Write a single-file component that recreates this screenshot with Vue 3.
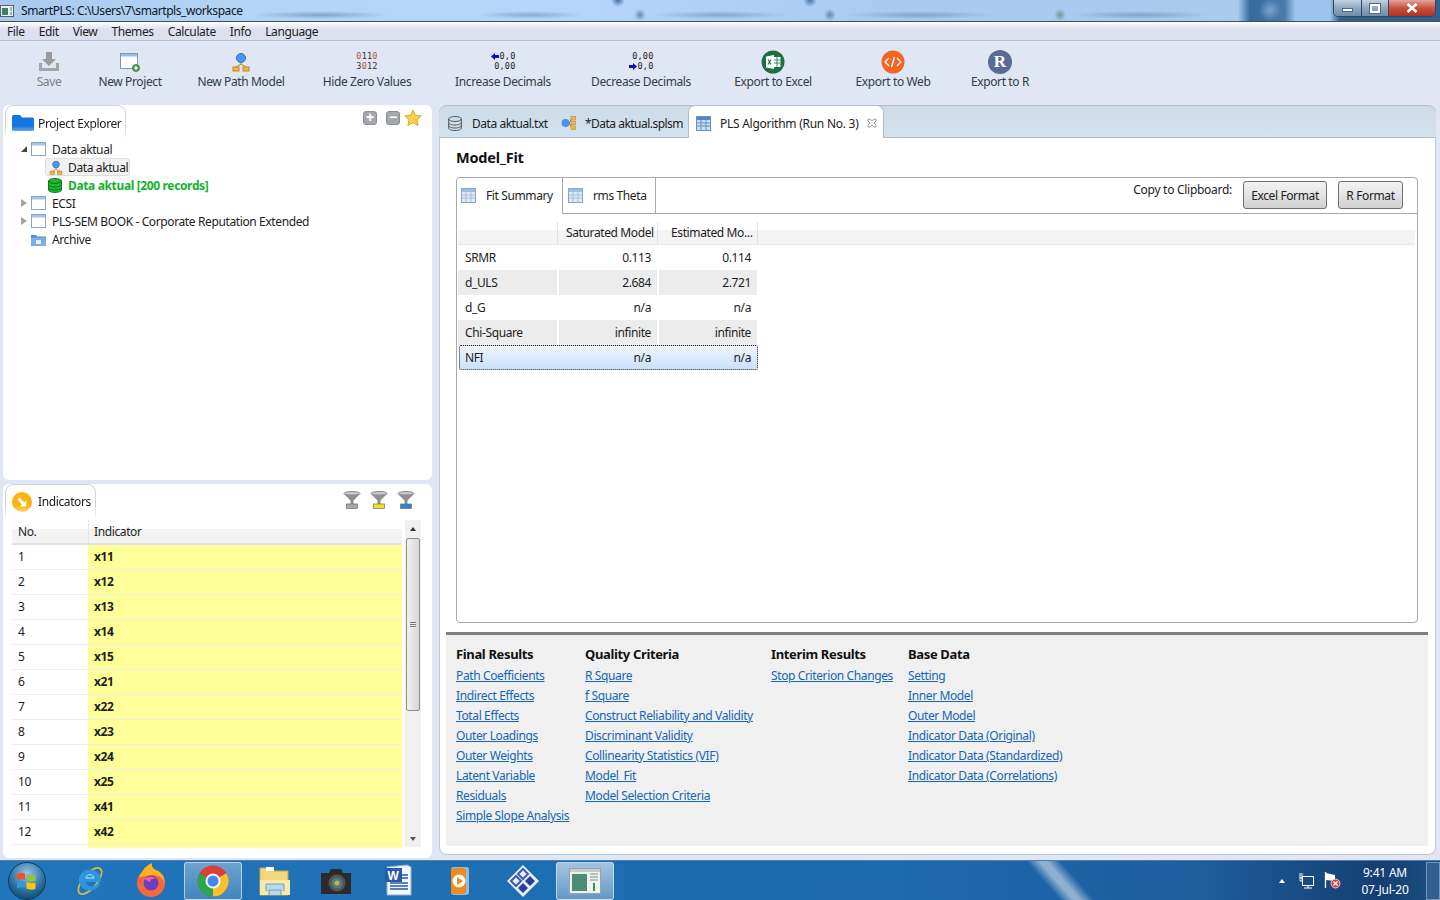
<script setup>
const fitRows = [
  { name: 'SRMR', a: '0.113', b: '0.114' },
  { name: 'd_ULS', a: '2.684', b: '2.721' },
  { name: 'd_G', a: 'n/a', b: 'n/a' },
  { name: 'Chi-Square', a: 'infinite', b: 'infinite' },
  { name: 'NFI', a: 'n/a', b: 'n/a' }
]

const indicators = ['x11', 'x12', 'x13', 'x14', 'x15', 'x21', 'x22', 'x23', 'x24', 'x25', 'x41', 'x42']

const resultGroups = [
  { title: 'Final Results', links: ['Path Coefficients', 'Indirect Effects', 'Total Effects', 'Outer Loadings', 'Outer Weights', 'Latent Variable', 'Residuals', 'Simple Slope Analysis'] },
  { title: 'Quality Criteria', links: ['R Square', 'f Square', 'Construct Reliability and Validity', 'Discriminant Validity', 'Collinearity Statistics (VIF)', 'Model_Fit', 'Model Selection Criteria'] },
  { title: 'Interim Results', links: ['Stop Criterion Changes'] },
  { title: 'Base Data', links: ['Setting', 'Inner Model', 'Outer Model', 'Indicator Data (Original)', 'Indicator Data (Standardized)', 'Indicator Data (Correlations)'] }
]
</script>

<template>
  <div class="desktop">
    <svg class="defs" width="0" height="0">
      <defs>
        <symbol id="project" viewBox="0 0 15 14">
          <rect x="0.5" y="0.5" width="14" height="13" fill="#fff" stroke="#8ba3c4" />
          <rect x="1" y="1" width="13" height="2.5" fill="#a9c4e6" />
        </symbol>
        <symbol id="grid" viewBox="0 0 15 15">
          <rect x="0.5" y="0.5" width="14" height="14" fill="#dfeaf6" stroke="#8aa6c8" />
          <rect x="1" y="1" width="13" height="3" fill="#9dbfe4" />
          <path d="M1 7h13M1 10h13M5 4v10M10 4v10" stroke="#a8bfd8" fill="none" />
        </symbol>
        <symbol id="model" viewBox="0 0 18 20">
          <circle cx="9" cy="6" r="4.5" fill="#4d94f5" stroke="#2d6dc4" />
          <path d="M9 10v3M4 15l5-3 5 3" stroke="#b98a2a" fill="none" />
          <rect x="1" y="15" width="6" height="4" fill="#f7b733" stroke="#b98a2a" />
          <rect x="11" y="15" width="6" height="4" fill="#f7b733" stroke="#b98a2a" />
        </symbol>
      </defs>
    </svg>

    <header class="titlebar">
      <svg class="app-icon" width="14" height="14" viewBox="0 0 14 14">
        <rect x="0.5" y="1.5" width="13" height="11" fill="#eef2f6" stroke="#56606c" />
        <rect x="2" y="4" width="6" height="7" fill="#3e7f6c" />
        <path d="M10 4h2M10 6h2M11 8v3" stroke="#2d8a4b" />
      </svg>
      <span class="title-text">SmartPLS: C:\Users\7\smartpls_workspace</span>
      <div class="window-btns">
        <span class="win-btn win-min"><i></i></span>
        <span class="win-btn win-max"><i></i></span>
        <span class="win-btn win-close">
          <svg width="14" height="10" viewBox="0 0 14 10">
            <path d="M2.5 1l9 8M11.5 1l-9 8" stroke="#fff" stroke-width="2.6" />
          </svg>
        </span>
      </div>
    </header>

    <nav class="menubar">
      <span>File</span><span>Edit</span><span>View</span><span>Themes</span><span>Calculate</span><span>Info</span><span>Language</span>
    </nav>

    <div class="toolbar">
      <div class="tool disabled">
        <svg width="22" height="20" viewBox="0 0 22 20">
          <path d="M8 0h6v7h4l-7 7-7-7h4z" fill="#9b9b9b" />
          <path d="M1 11h3v5h14v-5h3v8H1z" fill="#a5a5a5" />
        </svg>
        <span>Save</span>
      </div>
      <div class="tool">
        <svg width="20" height="20" viewBox="0 0 20 20">
          <rect x="0.5" y="1.5" width="17" height="15" fill="#fff" stroke="#7d96b8" />
          <rect x="1" y="2" width="16" height="2.5" fill="#9cbde4" />
          <circle cx="16" cy="16" r="3.6" fill="#4f9a45" stroke="#2e6f2a" stroke-width="0.6" />
          <path d="M16 14v4M14 16h4" stroke="#fff" stroke-width="1.2" />
        </svg>
        <span>New Project</span>
      </div>
      <div class="tool">
        <svg width="18" height="20"><use href="#model" /></svg>
        <span>New Path Model</span>
      </div>
      <div class="tool">
        <div class="digits">
          <div><b>0</b>11<b>0</b></div>
          <div>3<b>0</b>12</div>
        </div>
        <span>Hide Zero Values</span>
      </div>
      <div class="tool">
        <div class="digits decimals">
          <div><svg class="dec-arrow" width="8" height="7" viewBox="0 0 8 7"><path d="M0 3.500L4 0v2h4v3H4v2z" fill="#0d0dc4" /></svg>0,0</div>
          <div>0,00</div>
        </div>
        <span>Increase Decimals</span>
      </div>
      <div class="tool">
        <div class="digits decimals">
          <div>0,00</div>
          <div><svg class="dec-arrow" width="8" height="7" viewBox="0 0 8 7"><path d="M8 3.500L4 0v2H0v3h4v2z" fill="#0d0dc4" /></svg>0,0</div>
        </div>
        <span>Decrease Decimals</span>
      </div>
      <div class="tool">
        <svg width="24" height="24" viewBox="0 0 24 24">
          <circle cx="12" cy="12" r="11.5" fill="#1d6f42" />
          <path d="M5 6.5l8-1.5v14l-8-1.5z" fill="#fff" />
          <rect x="13" y="7" width="6.5" height="10" fill="#fff" />
          <path d="M13 10h6.5M13 13h6.5M16 7v10" stroke="#1d6f42" stroke-width="0.8" />
          <path d="M7 9.5l3 5M10 9.5l-3 5" stroke="#1d6f42" stroke-width="1.1" />
        </svg>
        <span>Export to Excel</span>
      </div>
      <div class="tool">
        <svg width="24" height="24" viewBox="0 0 24 24">
          <circle cx="12" cy="12" r="11.5" fill="#f26522" />
          <path d="M8 8l-4 4 4 4M16 8l4 4-4 4M13.5 7l-3 10" stroke="#fff" stroke-width="1.3" fill="none" />
        </svg>
        <span>Export to Web</span>
      </div>
      <div class="tool">
        <div class="r-badge">R</div>
        <span>Export to R</span>
      </div>
    </div>

    <main class="workspace">
      <div class="left-col">
        <section class="panel explorer">
          <div class="panel-head">
            <div class="view-tab">
              <svg width="22" height="16" viewBox="0 0 22 16">
                <path d="M0 1.5Q0 0 1.5 0H8l2 2.500h10.500Q22 2.500 22 4v10.500Q22 16 20.500 16h-19Q0 16 0 14.500z" fill="#1476e0" />
              </svg>
              <span>Project Explorer</span>
            </div>
            <div class="head-icons">
              <span class="square-btn">+</span>
              <span class="square-btn">−</span>
              <svg width="18" height="18" viewBox="0 0 18 18">
                <path d="M9 1l2.400 5.300 5.800.6-4.300 3.900 1.200 5.700L9 13.600l-5.100 2.900 1.200-5.700L.8 6.900l5.800-.6z" fill="#fbd24e" stroke="#e0a526" />
              </svg>
            </div>
          </div>
          <ul class="tree">
            <li>
              <i class="tw open"></i>
              <svg class="node" width="15" height="14"><use href="#project" /></svg>
              <span>Data aktual</span>
            </li>
            <li class="child">
              <div class="selected-node">
                <svg width="14" height="15" viewBox="0 0 18 20"><use href="#model" /></svg>
                <span>Data aktual</span>
              </div>
            </li>
            <li class="child">
              <svg class="data-green" width="14" height="15" viewBox="0 0 14 15">
                <ellipse cx="7" cy="3" rx="6.500" ry="2.500" fill="#13c02a" stroke="#0a5c14" stroke-width="0.8" />
                <path d="M.5 3v9c0 1.500 3 2.500 6.500 2.500s6.500-1 6.500-2.500V3c0 1.500-3 2.500-6.500 2.500S.5 4.500.5 3z" fill="#13c02a" stroke="#0a5c14" stroke-width="0.8" />
                <path d="M.5 6.500c0 1.500 3 2.500 6.500 2.500s6.500-1 6.500-2.500M.5 9.500c0 1.500 3 2.500 6.500 2.500s6.500-1 6.500-2.500" fill="none" stroke="#0a5c14" stroke-width="0.8" />
              </svg>
              <span class="green-label">Data aktual [200 records]</span>
            </li>
            <li>
              <i class="tw"></i>
              <svg class="node" width="15" height="14"><use href="#project" /></svg>
              <span>ECSI</span>
            </li>
            <li>
              <i class="tw"></i>
              <svg class="node" width="15" height="14"><use href="#project" /></svg>
              <span>PLS-SEM BOOK - Corporate Reputation Extended</span>
            </li>
            <li>
              <i class="tw blank"></i>
              <svg class="node" width="15" height="13" viewBox="0 0 15 13">
                <path d="M0 2h5l1 1.500h9V13H0z" fill="#4d8fd6" />
                <rect x="0" y="4.500" width="15" height="8.500" fill="#79aee6" />
                <rect x="5" y="7" width="5" height="4" fill="#e6f0fb" />
              </svg>
              <span>Archive</span>
            </li>
          </ul>
        </section>

        <section class="panel indicators">
          <div class="panel-head">
            <div class="view-tab">
              <svg width="20" height="20" viewBox="0 0 20 20">
                <circle cx="10" cy="10" r="10" fill="#fbb40f" />
                <path d="M5.500 7.500l2-2 4.700 4.700 2-2v6.300H7.900l2-2z" fill="#fff" />
              </svg>
              <span>Indicators</span>
            </div>
            <div class="filter-icons">
              <svg v-for="c in ['#a9a9a9', '#f4e521', '#2b86d8']" :key="c" width="18" height="18" viewBox="0 0 18 18">
                <ellipse cx="9" cy="2.500" rx="8" ry="2" fill="#c9c9c9" stroke="#8a8a8a" />
                <path d="M1.500 3.500l6 6h3l6-6z" fill="#8f8f8f" />
                <rect x="7.500" y="9" width="3" height="4" fill="#8f8f8f" />
                <rect x="3.500" y="13" width="11" height="4.500" :fill="c" stroke="#6f6f6f" stroke-width="0.7" />
              </svg>
            </div>
          </div>
          <div class="ind-body">
            <div class="ind-table">
              <div class="ind-head">
                <div class="ind-no">No.</div>
                <div class="ind-name">Indicator</div>
              </div>
              <div v-for="(item, i) in indicators" :key="item" class="ind-row">
                <div class="ind-no">{{ i + 1 }}</div>
                <div class="ind-name">{{ item }}</div>
              </div>
              <div class="ind-tail"></div>
            </div>
            <div class="scrollbar">
              <i class="scroll-up"></i>
              <div class="scroll-thumb"><b></b></div>
              <i class="scroll-down"></i>
            </div>
          </div>
        </section>
      </div>

      <section class="panel editor">
        <div class="editor-tabs">
          <div class="etab first">
            <svg width="14" height="15" viewBox="0 0 14 15">
              <ellipse cx="7" cy="3" rx="6.300" ry="2.500" fill="none" stroke="#555" />
              <path d="M.7 3v9c0 1.500 2.800 2.500 6.300 2.500s6.300-1 6.300-2.500V3M.7 6.500c0 1.500 2.800 2.500 6.300 2.500s6.300-1 6.300-2.500M.7 9.500c0 1.500 2.800 2.500 6.300 2.500s6.300-1 6.300-2.500" fill="none" stroke="#555" />
            </svg>
            <span>Data aktual.txt</span>
          </div>
          <div class="etab second">
            <svg width="15" height="14" viewBox="0 0 15 14">
              <circle cx="4.500" cy="7" r="4" fill="#4c93ef" />
              <path d="M8 7l2.500-4M8 7l2.500 4" stroke="#777" fill="none" />
              <rect x="10" y="0.500" width="4.500" height="3.500" fill="#f6b73c" stroke="#b8862a" stroke-width="0.6" />
              <rect x="10" y="5.200" width="4.500" height="3.500" fill="#f6b73c" stroke="#b8862a" stroke-width="0.6" />
              <rect x="10" y="10" width="4.500" height="3.500" fill="#f6b73c" stroke="#b8862a" stroke-width="0.6" />
            </svg>
            <span>*Data aktual.splsm</span>
          </div>
          <div class="etab active">
            <svg width="15" height="15" viewBox="0 0 15 15">
              <rect x="0.500" y="0.500" width="14" height="14" fill="#c8def5" stroke="#6c8fb8" />
              <rect x="1" y="1" width="13" height="3" fill="#4c86cc" />
              <path d="M1 7h13M1 10h13M5 4v10M10 4v10" stroke="#5f8fc5" fill="none" />
            </svg>
            <span>PLS Algorithm (Run No. 3)</span>
            <svg class="tab-close" width="10" height="10" viewBox="0 0 10 10">
              <path d="M1 1h2l2 2 2-2h2v2L7 5l2 2v2H7L5 7 3 9H1V7l2-2-2-2z" fill="none" stroke="#8a8a8a" stroke-width="0.8" />
            </svg>
          </div>
        </div>

        <div class="report">
          <h2 class="report-title">Model_Fit</h2>
          <div class="card">
            <div class="card-head">
              <div class="ctab on">
                <svg width="15" height="15"><use href="#grid" /></svg>
                <span>Fit Summary</span>
              </div>
              <div class="ctab">
                <svg width="15" height="15"><use href="#grid" /></svg>
                <span>rms Theta</span>
              </div>
              <div class="clipboard">
                <span>Copy to Clipboard:</span>
                <button class="btn-excel">Excel Format</button>
                <button class="btn-r">R Format</button>
              </div>
            </div>
            <div class="fit-table">
              <div class="fit-head">
                <div class="fit-c0"></div>
                <div class="fit-c1">Saturated Model</div>
                <div class="fit-c2">Estimated Mo...</div>
              </div>
              <div v-for="row in fitRows" :key="row.name" class="fit-row">
                <div class="fit-name">{{ row.name }}</div>
                <div class="fit-val">{{ row.a }}</div>
                <div class="fit-val">{{ row.b }}</div>
              </div>
            </div>
          </div>
        </div>

        <div class="results">
          <div v-for="group in resultGroups" :key="group.title" class="result-col">
            <h3>{{ group.title }}</h3>
            <a v-for="link in group.links" :key="link">{{ link }}</a>
          </div>
        </div>
      </section>
    </main>

    <footer class="taskbar">
      <div class="start-orb">
        <svg width="24" height="24" viewBox="0 0 24 24">
          <path d="M2 5q4-2 8-.5V11q-4-1.500-8 .5z" fill="#e8552d" />
          <path d="M11.500 5q4 2 9 .5V12q-5 1.500-9-.5z" fill="#8cc63f" />
          <path d="M2 13q4-2 8-.5V19q-4-1.500-8 .5z" fill="#2f9ae0" />
          <path d="M11.500 13q4 2 9 .5V20q-5 1.500-9-.5z" fill="#fcc419" />
        </svg>
      </div>
      <div class="task"><svg width="34" height="36" viewBox="0 0 34 36">
        <ellipse cx="17" cy="18" rx="16" ry="7" transform="rotate(-50 17 18)" fill="none" stroke="#d9b64e" stroke-width="1.800" />
        <path d="M6 19a11 11 0 1 1 21.800 0H13c.5 5 8 6 11.500 1.500h3C24 30 8 30 6 19z" fill="#2f96de" />
        <path d="M13 15h8c-.5-4.500-7.500-4.500-8 0z" fill="#2f96de" stroke="#bfe2f8" />
      </svg></div>
      <div class="task"><svg width="32" height="36" viewBox="0 0 32 36">
        <circle cx="16" cy="20" r="14" fill="#f7673b" />
        <path d="M4 14Q10 2 17 0q-1 6 6 8 6 3 7 12-4-9-14-8z" fill="#ffb21f" />
        <circle cx="16" cy="20" r="7.500" fill="#6c3ec4" />
        <path d="M9 16q7-5 12 0-6-1-6 3z" fill="#f25d9c" />
      </svg></div>
      <div class="task active-task"><svg width="34" height="34" viewBox="0 0 34 34">
        <circle cx="17" cy="17" r="15.500" fill="#dc3f34" />
        <path d="M17 17L3.600 9.200A15.500 15.500 0 0 0 17 32.500z" fill="#2ea44f" />
        <path d="M17 17V32.500A15.500 15.500 0 0 0 30.400 9.200z" fill="#fbc02d" />
        <circle cx="17" cy="17" r="7.500" fill="#f2f6fb" />
        <circle cx="17" cy="17" r="5.500" fill="#4285f4" />
      </svg></div>
      <div class="task"><svg width="34" height="32" viewBox="0 0 34 32">
        <path d="M2 3h12l2 3h14v24H2z" fill="#f4d77d" stroke="#caa84c" />
        <path d="M8 2h8v4H8z" fill="#fff" />
        <path d="M2 15h30v15H2z" fill="#fbe9a8" />
        <path d="M8 26v-7h18v7M11 30v-5h12v5" fill="#bcd8ea" stroke="#6f9fc0" />
      </svg></div>
      <div class="task"><svg width="32" height="28" viewBox="0 0 32 28">
        <path d="M1 6h8l2-4h10l2 4h8v21H1z" fill="#2b2b2b" />
        <circle cx="17" cy="16" r="8.500" fill="#555" />
        <circle cx="17" cy="16" r="5.500" fill="#4f7d78" />
        <circle cx="17" cy="16" r="2.500" fill="#c8b04f" />
      </svg></div>
      <div class="task"><svg width="32" height="34" viewBox="0 0 32 34">
        <path d="M5 3l20-2 4 2v28H5z" fill="#f3f6fb" stroke="#9bb0cc" />
        <path d="M15 11h11M15 14h11M8 19h18M8 22h18M8 25h18" stroke="#2a5aa8" stroke-width="1.500" />
        <rect x="3" y="4" width="17" height="14" fill="#2a5aa8" />
        <text x="5.500" y="15.500" class="word-w">W</text>
      </svg></div>
      <div class="task media"><svg width="24" height="30" viewBox="0 0 24 30">
        <rect x="1" y="1" width="18" height="28" rx="3" fill="#8cbde2" />
        <rect x="1" y="2" width="15" height="26" rx="3" fill="#f08a1d" />
        <circle cx="9" cy="15" r="6.500" fill="#fff" />
        <path d="M7 11l6 4-6 4z" fill="#f08a1d" />
      </svg></div>
      <div class="task diamond"><svg width="34" height="34" viewBox="0 0 34 34">
        <path d="M17 1l16 16-16 16L1 17z" fill="#e9f0fb" />
        <path d="M17 5l5 5-5 5-5-5zM10 12l5 5-5 5-5-5z" fill="none" stroke="#3d5bb5" stroke-width="2" />
        <path d="M24 12l5 5-5 5-5-5zM17 19l5 5-5 5-5-5z" fill="#2a3f99" />
      </svg></div>
      <div class="task active-task light"><svg width="32" height="26" viewBox="0 0 32 26">
        <rect x="0.500" y="0.500" width="31" height="25" fill="#eef2ef" stroke="#9aa3a7" />
        <rect x="1" y="1" width="30" height="3" fill="#c4ccd0" />
        <path d="M3 6h15v17H3z" fill="#4e8c74" />
        <path d="M21 6h8M21 9h8M21 12h8" stroke="#7d8d96" />
        <path d="M25 15v8" stroke="#2e9a4e" stroke-width="2" />
      </svg></div>

      <div class="tray">
        <i class="tray-up"></i>
        <svg width="16" height="16" viewBox="0 0 16 16">
          <rect x="3.500" y="3.500" width="11" height="9" fill="none" stroke="#fff" />
          <path d="M1 0v5M3 0v5M1 5h2v3H1zM5 15h8M9 12.500V15" stroke="#fff" />
        </svg>
        <svg width="17" height="17" viewBox="0 0 17 17">
          <path d="M1.500 0v16" stroke="#fff" stroke-width="1.300" />
          <path d="M2 1l9 2v6L2 8z" fill="#fff" />
          <circle cx="11.500" cy="11.500" r="4.500" fill="#e23a3a" stroke="#fff" stroke-width="0.700" />
          <path d="M9.500 9.500l4 4M13.500 9.500l-4 4" stroke="#fff" stroke-width="1.300" />
        </svg>
        <div class="clock">
          <span>9:41 AM</span>
          <span>07-Jul-20</span>
        </div>
        <div class="show-desktop"></div>
      </div>
    </footer>
  </div>
</template>

<style>
html, body { margin: 0; overflow: hidden; }
</style>

<style scoped>
* { box-sizing: border-box; }
.defs { position: absolute; }
.desktop {
  width: 1440px;
  height: 900px;
  display: flex;
  flex-direction: column;
  background: #e1e6f4;
  font-family: "Noto Sans", sans-serif;
  font-size: 12px;
  letter-spacing: -0.38px;
  color: #1d1d1d;
  overflow: hidden;
}

.titlebar {
  height: 22px;
  display: flex;
  align-items: flex-start;
  border-bottom: 1px solid #3c4f63;
  background:
    radial-gradient(circle 11px at 1270px 10px, #7fa3c9, transparent),
    radial-gradient(circle 7px at 618px 0, #3f6fa8, transparent),
    radial-gradient(circle 7px at 810px 0, #3f6fa8, transparent),
    radial-gradient(circle 6px at 640px 15px, rgba(70,85,110,.6), transparent),
    radial-gradient(circle 6px at 830px 15px, rgba(70,85,110,.6), transparent),
    radial-gradient(circle 6px at 1060px 15px, rgba(70,120,90,.6), transparent),
    radial-gradient(ellipse 70px 4px at 320px 15px, rgba(60,90,130,.4), transparent),
    radial-gradient(ellipse 55px 4px at 530px 15px, rgba(60,90,130,.35), transparent),
    radial-gradient(ellipse 70px 4px at 720px 15px, rgba(60,90,130,.35), transparent),
    radial-gradient(ellipse 75px 4px at 920px 15px, rgba(60,90,130,.35), transparent),
    radial-gradient(ellipse 70px 4px at 1140px 15px, rgba(60,90,130,.35), transparent),
    linear-gradient(to right, #aac9ec 0, #b4d4f6 240px, #b5d6fa 560px, #a9cbf0 900px, #a8caed 1238px, #346a9d 1250px, #4b7bad 1285px, #9cc4ec 1295px, #9cc4ec 1330px, #2f628f 1340px);
}
.app-icon { margin: 4px 0 0 0; flex: none; }
.title-text { margin: 3px 0 0 7px; color: #10161d; line-height: 16px; letter-spacing: -0.43px; }
.window-btns {
  margin-left: auto;
  margin-right: 4px;
  display: flex;
  height: 17px;
  border: 1px solid #33465a;
  border-top: 0;
  border-radius: 0 0 5px 5px;
  overflow: hidden;
}
.win-btn {
  display: flex;
  align-items: center;
  justify-content: center;
  background: linear-gradient(#c3d2e4, #8fa7c2 50%, #6f8dad);
  border-right: 1px solid #33465a;
}
.win-min { width: 28px; }
.win-min i { width: 11px; height: 4px; margin-top: 4px; background: #fff; border: 1px solid #55697e; }
.win-max { width: 27px; }
.win-max i { width: 10px; height: 9px; background: transparent; border: 2px solid #fff; outline: 1px solid #55697e; }
.win-close { width: 46px; border-right: 0; background: linear-gradient(#dfa79e, #c8513f 50%, #b5301e); }

.menubar {
  height: 19px;
  display: flex;
  align-items: center;
  gap: 14px;
  padding-left: 7px;
  background: linear-gradient(#fff, #dde1ef 40%, #dde1ef);
  border-bottom: 1px solid #b9bdca;
}

.toolbar {
  height: 64px;
  flex: none;
  display: grid;
  grid-template-columns: 62px 100px 122px 130px 142px 134px 130px 110px 104px;
  padding-left: 18px;
}
.tool {
  display: flex;
  flex-direction: column;
  align-items: center;
  white-space: nowrap;
  color: #333b47;
  padding-top: 9px;
  position: relative;
}
.tool > svg, .tool > .digits, .tool > .r-badge { height: 24px; flex: none; }
.tool span { line-height: 16px; }
.disabled span { color: #7d7f85; }
.digits {
  font-family: "DejaVu Sans Mono", monospace;
  font-size: 8.500px;
  letter-spacing: 0.2px;
  line-height: 9.500px;
  padding-top: 2px;
  color: #333;
  text-align: right;
}
.digits b { color: #b5572a; font-weight: 400; }
.decimals { color: #222; }
.dec-arrow { margin-right: 1px; vertical-align: -1px; }
.r-badge {
  width: 24px;
  border-radius: 50%;
  background: #596b92;
  color: #fff;
  font: 700 17px/24px "Liberation Serif", serif;
  text-align: center;
  letter-spacing: 0;
}

.workspace {
  flex: 1;
  min-height: 0;
  display: grid;
  grid-template-columns: 429px 997px;
  column-gap: 7px;
  padding: 0 0 0 3px;
  align-items: start;
}
.left-col { display: flex; flex-direction: column; gap: 4px; height: 753px; }
.panel { background: #fff; border-radius: 6px; }
.explorer { height: 375px; }
.indicators { height: 374px; }
.panel-head { height: 36px; display: flex; justify-content: space-between; }
.explorer .panel-head { height: 35px; }
.view-tab {
  display: flex;
  align-items: center;
  margin-left: 2px;
  height: 100%;
  padding: 0 4px 0 6px;
  gap: 4px;
  border: 1px solid #cfd3da;
  border-bottom: 0;
  border-radius: 8px 8px 0 0;
  -webkit-mask-image: linear-gradient(#000 60%, transparent);
  color: #1a1a1a;
}
.indicators .view-tab { gap: 6px; padding-bottom: 2px; }
.head-icons { display: flex; align-items: center; gap: 9px; padding: 0 10px 9px 0; }
.head-icons svg { margin-left: -5px; }
.square-btn {
  width: 14px;
  height: 14px;
  border-radius: 3px;
  background: #a4a7ac;
  border: 1px solid #8b8e93;
  color: #fff;
  font: 700 14px/11px "Liberation Sans", sans-serif;
  text-align: center;
}

.tree { list-style: none; margin: 0; padding: 0 0 0 18px; }
.tree li { height: 18px; display: flex; align-items: center; white-space: nowrap; }
.tw { width: 0; height: 0; margin-right: 4px; border: 0 solid transparent; border-width: 4px 0 4px 6px; border-left-color: #a4a4a4; flex: none; }
.tw.open { border-width: 0 0 6px 6px; border-color: transparent transparent #444 transparent; }
.tw.blank { border-color: transparent; }
.node { margin-right: 6px; flex: none; }
.tree .child { padding-left: 24px; }
.selected-node {
  display: flex;
  align-items: center;
  gap: 5px;
  height: 18px;
  width: 85px;
  padding-left: 3px;
  background: #f1f1f1;
  border: 1px solid #dedede;
  border-radius: 3px;
}
.data-green { margin: 0 6px 0 3px; }
.green-label { color: #10b32a; font-weight: 700; letter-spacing: -0.36px; }

.filter-icons { display: flex; gap: 9px; padding: 7px 17px 0 0; align-items: flex-start; }
.ind-body { display: flex; padding-left: 9px; height: 328px; }
.ind-table { width: 390px; height: 328px; overflow: hidden; }
.ind-head { height: 25px; display: flex; border-bottom: 2px solid #e3e3e3; background: linear-gradient(#fff 38%, #f3f3f3 38%, #f3f3f3); }
.ind-head .ind-name { background: transparent; font-weight: 400; border-left: 1px solid #e6e6e6; padding-left: 5px; }
.ind-no { width: 76px; padding-left: 6px; line-height: 24px; flex: none; }
.ind-name { flex: 1; background: #ffff99; font-weight: 700; padding-left: 6px; line-height: 24px; }
.ind-row { height: 25px; display: flex; border-bottom: 1px solid #eeeeee; }
.ind-tail { height: 6px; margin-left: 76px; background: #ffff99; }
.scrollbar {
  width: 16px;
  margin-left: 3px;
  height: 327px;
  background: #f0f0f0;
  display: flex;
  flex-direction: column;
  align-items: center;
}
.scroll-up { height: 0; width: 0; flex: none; margin: 7px 0 7px; border: 0 solid transparent; border-width: 0 3.500px 4px; border-bottom-color: #333; }
.scroll-down { height: 0; width: 0; flex: none; margin: auto 0 6px; border: 0 solid transparent; border-width: 4px 3.500px 0; border-top-color: #555; }
.scroll-thumb {
  width: 14px;
  height: 173px;
  flex: none;
  border: 1px solid #8f8f8f;
  border-radius: 2px;
  background: linear-gradient(to right, #f2f2f2, #d6d6d6);
  display: flex;
  align-items: center;
  justify-content: center;
}
.scroll-thumb b { width: 6px; height: 6px; background: repeating-linear-gradient(#777 0 1px, #eee 1px 2px); }

.editor {
  height: 750px;
  display: flex;
  flex-direction: column;
  border: 1px solid #c3c8d0;
  border-top: 0;
  border-radius: 8px;
}
.editor-tabs {
  height: 33px;
  flex: none;
  display: flex;
  background: linear-gradient(#ccdbe9, #d4e2ee);
  border-top: 1px solid #b6bcc7;
  border-bottom: 1px solid #b6bcc7;
  border-radius: 8px 8px 0 0;
  margin: 0 -1px;
  padding-left: 9px;
  position: relative;
}
.etab { display: flex; align-items: center; white-space: nowrap; }
.etab.first { width: 113px; gap: 9px; padding-top: 3px; }
.etab.first span { margin-left: 1px; letter-spacing: -0.46px; }
.etab.second { width: 127px; gap: 9px; padding-top: 3px; }
.etab.second span { letter-spacing: -0.52px; }
.etab.active {
  width: 196px;
  height: 33px;
  margin-top: -1px;
  padding: 2px 0 0 7px;
  background: #fff;
  border: 1px solid #b6bcc7;
  border-bottom: 0;
  border-radius: 7px 7px 0 0;
  gap: 9px;
}
.etab.active span { letter-spacing: -0.26px; }
.tab-close { margin-left: -1px; }

.report { flex: none; height: 494px; padding: 0 0 0 16px; }
.report-title { margin: 0; height: 39px; font-size: 14.500px; font-weight: 700; line-height: 38px; color: #111; letter-spacing: -0.2px; }
.card {
  width: 962px;
  height: 446px;
  border: 1px solid #a9a9a9;
  border-radius: 4px;
  display: flex;
  flex-direction: column;
}
.card-head { height: 36px; flex: none; display: flex; }
.ctab {
  display: flex;
  align-items: center;
  gap: 10px;
  height: 36px;
  padding-left: 4px;
  border-right: 1px solid #a9a9a9;
  white-space: nowrap;
}
.ctab:not(.on) { border-bottom: 1px solid #a9a9a9; width: 93px; padding-left: 5px; }
.ctab.on { width: 106px; padding-bottom: 1px; }
.clipboard {
  flex: 1;
  display: flex;
  align-items: flex-start;
  justify-content: flex-end;
  padding-right: 14px;
  padding-top: 3px;
  border-bottom: 1px solid #a9a9a9;
}
.clipboard span { line-height: 18px; margin-right: 11px; letter-spacing: -0.28px; }
.clipboard button {
  height: 28px;
  font: inherit;
  letter-spacing: inherit;
  color: #222;
  border: 1px solid #6f6f6f;
  border-radius: 3px;
  background: linear-gradient(#f2f2f2, #e4e4e4 50%, #d0d0d0);
  padding: 0;
}
.btn-excel { width: 84px; }
.btn-r { width: 65px; margin-left: 11px; }

.fit-table { padding: 8px 2px 0 1px; }
.fit-head { height: 23px; display: flex; background: linear-gradient(#fff 35%, #f4f4f4 35%); border-bottom: 1px solid #e6e6e6; }
.fit-head > div { border-right: 1px solid #e2e2e2; line-height: 22px; white-space: nowrap; }
.fit-c0 { width: 100px; }
.fit-c1 { width: 100px; padding-left: 8px; }
.fit-c2 { width: 100px; padding-left: 13px; }
.fit-row {
  height: 25px;
  width: 299px;
  display: grid;
  grid-template-columns: 99px 98px 98px;
  column-gap: 2px;
  line-height: 25px;
}
.fit-name { padding-left: 7px; }
.fit-val { text-align: right; padding-right: 6px; }
.fit-row:nth-child(odd) > div { background: #ececec; }
.fit-row:last-child {
  margin-left: 1px;
  grid-template-columns: 97px 98px 98px;
  line-height: 23px;
  background: linear-gradient(#f0f6fe, #c9e0fa);
  border: 1px dotted #222;
  border-radius: 2px;
}
.fit-row:last-child > div { background: transparent; }
.fit-row:last-child .fit-name { padding-left: 5px; }

.results {
  flex: none;
  margin: 0 7px 0 6px;
  height: 214px;
  border-top: 3px solid #808080;
  background: #f0f0f0;
  display: grid;
  grid-template-columns: 129px 186px 137px auto;
  padding: 10px 0 0 10px;
}
.result-col { display: flex; flex-direction: column; align-items: flex-start; }
.result-col h3 { margin: 0; font-size: 13px; font-weight: 700; line-height: 19px; color: #111; height: 21px; letter-spacing: -0.35px; }
.result-col a { color: #1565b5; text-decoration: underline; line-height: 20px; height: 20px; white-space: nowrap; }

.taskbar {
  height: 40px;
  flex: none;
  display: flex;
  align-items: center;
  position: relative;
  border-top: 1px solid #4a7fb0;
  background:
    linear-gradient(49deg, transparent 800px, rgba(255,255,255,.5) 810px, rgba(255,255,255,.5) 815px, transparent 826px),
    linear-gradient(to right, #2275b9 0, #1c69ad 900px, #1e5d9e 1200px, #153f6f 1380px, #1a4f85 1440px);
  padding-left: 59px;
}
.start-orb {
  position: absolute;
  left: 8px;
  top: 1px;
  width: 38px;
  height: 38px;
  border-radius: 50%;
  background: radial-gradient(circle at 50% 30%, #9cc8e6, #2a6f9f 55%, #123f63 90%);
  border: 1px solid #0f3c62;
  display: flex;
  align-items: center;
  justify-content: center;
}
.task { width: 61.500px; height: 38px; flex: none; display: flex; align-items: center; justify-content: center; }
.task.media svg { margin-left: 6px; }
.task.diamond { margin-left: 2px; }
.task.active-task {
  width: 58px;
  margin: 0 2px;
  border: 1px solid rgba(220,235,250,.7);
  border-radius: 3px;
  background: linear-gradient(rgba(255,255,255,.35), rgba(255,255,255,.14));
}
.task.light { background: linear-gradient(rgba(255,255,255,.6), rgba(255,255,255,.3)); }
.word-w { font: 700 12px "Liberation Sans", sans-serif; fill: #fff; }
.tray {
  margin-left: auto;
  display: flex;
  align-items: center;
  height: 38px;
  color: #fff;
}
.tray-up { width: 0; height: 0; border: 0 solid transparent; border-width: 0 3.500px 4px; border-bottom-color: #fff; margin-right: 14px; }
.tray svg { margin-right: 9px; }
.clock {
  width: 82px;
  margin-left: -6px;
  display: flex;
  flex-direction: column;
  align-items: center;
  line-height: 17px;
  letter-spacing: -0.2px;
}
.show-desktop {
  width: 14px;
  height: 38px;
  border: 1px solid rgba(255,255,255,.35);
  background: rgba(255,255,255,.1);
}
</style>
